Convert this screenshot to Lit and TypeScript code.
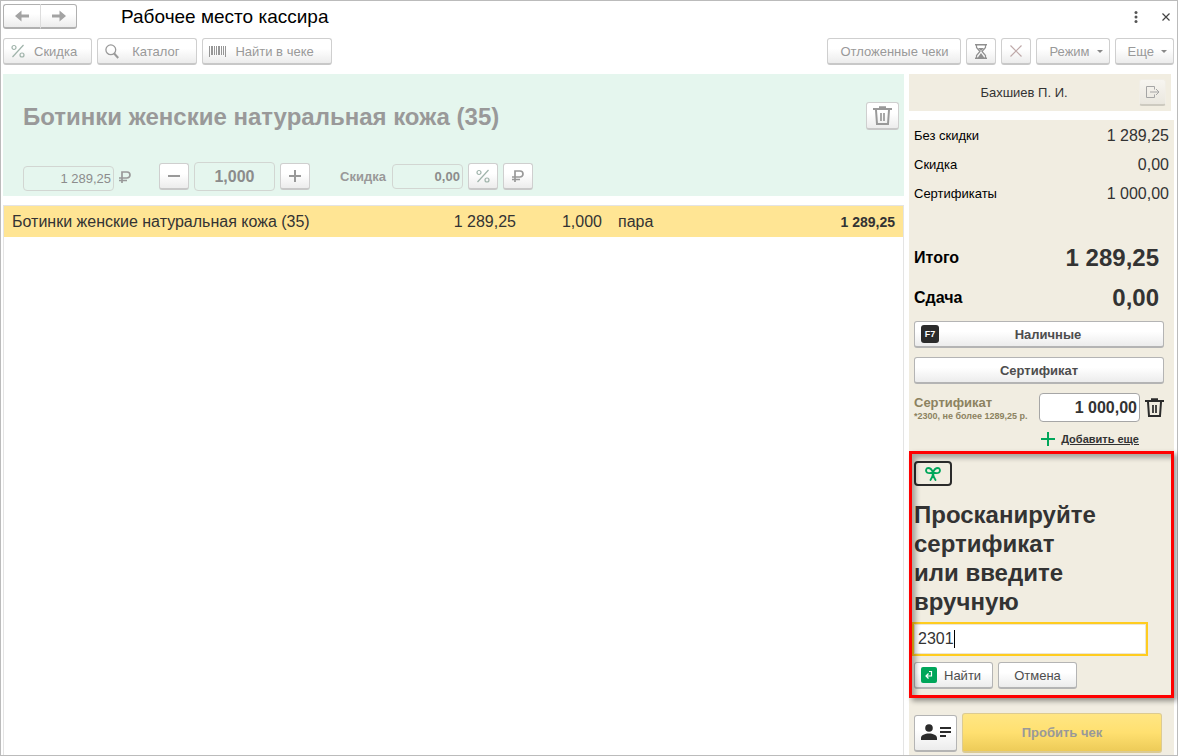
import { LitElement, html, css, svg } from "lit";
import { customElement, property, state } from "lit/decorators.js";

const icons = {
  back: svg`<svg width="16" height="12" viewBox="0 0 16 12"><path d="M1 6 7.500 .5v4H15v3H7.500v4z" fill="#a3a3a3"/></svg>`,
  forward: svg`<svg width="16" height="12" viewBox="0 0 16 12"><path d="M15 6 8.500 .5v4H1v3h7.500v4z" fill="#a3a3a3"/></svg>`,
  percent: svg`<svg width="14" height="14" viewBox="0 0 14 14" fill="none" stroke="#9fb3aa" stroke-width="1.200"><circle cx="3" cy="3.500" r="2"/><circle cx="11" cy="11" r="2"/><path d="M12.500 1 1.500 13"/></svg>`,
  search: svg`<svg width="14" height="15" viewBox="0 0 14 15" fill="none" stroke="#999"><circle cx="5.800" cy="5.800" r="4.900" stroke-width="1.300"/><path d="m9.200 9.500 4 4.500" stroke-width="2"/></svg>`,
  barcode: svg`<svg width="17" height="11" viewBox="0 0 17 11" fill="#969696" shape-rendering="crispEdges"><path d="M0 0h1v11H0zM2 0h2v9H2zM5 0h1v9H5zM7 0h1v9H7zM9 0h2v9H9zM12 0h1v9h-1zM14 0h1v9h-1zM16 0h1v11h-1z"/></svg>`,
  hourglass: svg`<svg width="12" height="15" viewBox="0 0 12 15"><path d="M0 .8h12M0 14.200h12" stroke="#8f8f8f" stroke-width="1.500"/><path d="M1.500 1v2.500L5 7.500 1.500 11.500V14M10.500 1v2.500L7 7.500l3.500 4V14" fill="none" stroke="#8f8f8f" stroke-width="1.200"/><path d="M3 4h6L6 7zM6 9l3.500 5h-7z" fill="#8f8f8f"/></svg>`,
  cross: svg`<svg width="12" height="12" viewBox="0 0 12 12"><path d="m.5.5 11 11M11.500.5l-11 11" stroke="#bfa9a9" stroke-width="1.200"/></svg>`,
  caret: svg`<svg width="6" height="3" viewBox="0 0 6 3"><path d="M0 0h6L3 3z" fill="#888"/></svg>`,
  dots: svg`<svg width="4" height="12" viewBox="0 0 4 12" fill="#555"><circle cx="2" cy="1.600" r="1.500"/><circle cx="2" cy="6" r="1.500"/><circle cx="2" cy="10.400" r="1.500"/></svg>`,
  close: svg`<svg width="8" height="8" viewBox="0 0 8 8"><path d="m.5.5 7 7M7.500.5l-7 7" stroke="#444" stroke-width="1.200"/></svg>`,
  trash: svg`<svg width="19" height="20" viewBox="0 0 19 20" fill="none" stroke="currentColor"><path d="M0 3h19" stroke-width="2"/><path d="M6 1.500h7" stroke-width="2.500"/><path d="m3 4 1 14h11l1-14" stroke-width="2"/><path d="M8 7v8M11 7v8" stroke-width="1.700"/></svg>`,
  minus: svg`<svg width="12" height="12" viewBox="0 0 12 12"><path d="M0 6h12" stroke="#999" stroke-width="2"/></svg>`,
  plus: svg`<svg width="12" height="12" viewBox="0 0 12 12"><path d="M0 6h12M6 0v12" stroke="#999" stroke-width="2"/></svg>`,
  add: svg`<svg width="14" height="14" viewBox="0 0 14 14"><path d="M0 7h14M7 0v14" stroke="#00a65a" stroke-width="2"/></svg>`,
  ruble: svg`<svg width="12" height="12" viewBox="0 0 12 12" fill="none" stroke="#999" stroke-width="1.700"><path d="M3 12V1h5a2.900 2.900 0 0 1 0 6H0M0 9.500h8"/></svg>`,
  exit: svg`<svg width="14" height="12" viewBox="0 0 14 12" fill="none" stroke="#a5a5a5"><path d="M8.500 3.500V.5h-8v11h8v-3M4 6h9M10 3l3 3-3 3"/></svg>`,
  bow: svg`<svg width="16" height="14" viewBox="0 0 16 14" fill="none" stroke="#00a65a" stroke-width="1.900" stroke-linecap="round"><path d="M8 5.500C7 2.500 5 1 3 1 .8 1 .5 4.500 2 5.500s4.500.5 6 0Zm0 0C9 2.500 11 1 13 1c2.200 0 2.500 3.500 1 4.500s-4.500.5-6 0ZM8 6c0 3-1 5-2.500 7M8 6c0 3 1 5 2.500 7"/></svg>`,
  enter: svg`<svg width="16" height="16" viewBox="0 0 16 16"><rect width="16" height="16" rx="2" fill="#00a65a"/><path d="M8 4.500h2.500V9H5M7.500 6.500 5 9l2.500 2.500" fill="none" stroke="#fff" stroke-width="1.200"/></svg>`,
  customer: svg`<svg width="30" height="17" viewBox="0 0 30 17" fill="#2b2b2b"><circle cx="8" cy="4" r="3.800"/><path d="M0 16v-2c0-3 4-4.500 8-4.500s8 1.500 8 4.500v2zM19 3h11v2H19zM19 7h11v2H19zM19 11h6v2h-6z"/></svg>`,
};

interface ReceiptLine {
  name: string;
  price: string;
  quantity: string;
  unit: string;
  sum: string;
}

const base = css`
  * {
    box-sizing: border-box;
  }
  svg {
    display: block;
    flex: none;
  }
  button,
  input {
    font-family: inherit;
    margin: 0;
  }
  .btn {
    display: inline-flex;
    align-items: center;
    justify-content: center;
    flex: none;
    height: 27px;
    padding: 0;
    border: 1px solid #cfcfcf;
    border-bottom: 2px solid #c8c8c8;
    border-radius: 3px;
    background: linear-gradient(#fff 40%, #ececec);
    color: #999;
    font-size: 13px;
    white-space: nowrap;
  }
  .square {
    width: 30px;
  }
`;

@customElement("cashier-toolbar")
export class CashierToolbar extends LitElement {
  static styles = [
    base,
    css`
      :host {
        display: block;
      }
      .title-bar {
        display: flex;
        align-items: center;
        height: 31px;
        padding: 0 1px 0 2px;
      }
      .nav {
        display: flex;
        margin-right: 44px;
      }
      .nav .btn {
        width: 37px;
        height: 25px;
        border-color: #b0b0b0;
      }
      .nav .btn:first-child {
        border-radius: 3px 0 0 3px;
        width: 38px;
        border-right-color: #ddd;
      }
      .nav .btn:last-child {
        border-radius: 0 3px 3px 0;
        border-left: 0;
        width: 36px;
      }
      h1 {
        margin: 0;
        font-size: 19px;
        font-weight: 400;
        color: #000;
      }
      .plain {
        display: flex;
        justify-content: center;
        width: 20px;
        padding: 0;
        border: 0;
        background: none;
      }
      .window-tools {
        display: flex;
        align-items: center;
        gap: 10px;
        margin-left: auto;
      }
      .tools {
        display: flex;
        gap: 5px;
        padding: 6px 3px 9px 2px;
      }
      .tools .btn.text {
        padding: 0 14px 0 7px;
        gap: 9px;
      }
      .tools .btn.search {
        padding: 0 17px 0 7px;
        gap: 13px;
      }
      .tools .btn.find {
        padding: 0 17px 0 6px;
        gap: 9px;
      }
      .tools .btn.label {
        padding: 0 12px;
      }
      .tools .btn.menu {
        padding: 0 6px 0 12px;
        gap: 7px;
      }
      .spacer {
        flex: 1;
      }
    `,
  ];

  render() {
    return html`
      <header class="title-bar">
        <nav class="nav">
          <button class="btn" aria-label="Назад">${icons.back}</button>
          <button class="btn" aria-label="Вперед">${icons.forward}</button>
        </nav>
        <h1>Рабочее место кассира</h1>
        <div class="window-tools">
          <button class="plain" aria-label="Меню">${icons.dots}</button>
          <button class="plain" aria-label="Закрыть">${icons.close}</button>
        </div>
      </header>
      <div class="tools">
        <button class="btn text">${icons.percent}Скидка</button>
        <button class="btn search">${icons.search}Каталог</button>
        <button class="btn find">${icons.barcode}Найти в чеке</button>
        <span class="spacer"></span>
        <button class="btn label">Отложенные чеки</button>
        <button class="btn square" aria-label="Отложить">${icons.hourglass}</button>
        <button class="btn square" aria-label="Отменить">${icons.cross}</button>
        <button class="btn menu">Режим ${icons.caret}</button>
        <button class="btn menu">Еще ${icons.caret}</button>
      </div>
    `;
  }
}

@customElement("current-item")
export class CurrentItem extends LitElement {
  static styles = [
    base,
    css`
      :host {
        display: block;
        padding: 28px 5px 5px 20px;
        background: #e5f6ee;
        color: #999;
      }
      .heading {
        display: flex;
        justify-content: space-between;
        align-items: center;
        height: 28px;
      }
      h2 {
        margin: 0;
        font-size: 24px;
        line-height: 30px;
        padding-top: 2px;
      }
      .delete {
        width: 33px;
        height: 28px;
      }
      .controls {
        display: flex;
        align-items: center;
        gap: 5px;
        margin-top: 32px;
      }
      input {
        border: 1px solid #d2d6d2;
        border-radius: 4px;
        background: transparent;
        color: #8c8c8c;
        text-align: right;
        padding: 0 2px;
        height: 25px;
      }
      .price {
        width: 91px;
        font-size: 13px;
        margin-top: 3px;
      }
      .currency {
        margin-right: 23px;
      }
      .quantity {
        width: 81px;
        height: 29px;
        text-align: center;
        font-size: 16px;
        font-weight: 700;
      }
      .discount {
        width: 71px;
        font-size: 13px;
        font-weight: 700;
      }
      label {
        margin-left: 25px;
        margin-right: 1px;
        font-size: 13px;
        font-weight: 700;
      }
    `,
  ];

  @property() name = "";

  render() {
    return html`
      <div class="heading">
        <h2>${this.name}</h2>
        <button class="btn delete" aria-label="Удалить">${icons.trash}</button>
      </div>
      <div class="controls">
        <input class="price" aria-label="Цена" value="1 289,25" readonly />
        <span class="currency">${icons.ruble}</span>
        <button class="btn square" aria-label="Меньше">${icons.minus}</button>
        <input class="quantity" aria-label="Количество" value="1,000" readonly />
        <button class="btn square" aria-label="Больше">${icons.plus}</button>
        <label for="discount">Скидка</label>
        <input id="discount" class="discount" value="0,00" readonly />
        <button class="btn square" aria-label="Скидка в процентах">${icons.percent}</button>
        <button class="btn square" aria-label="Скидка в рублях">${icons.ruble}</button>
      </div>
    `;
  }
}

@customElement("receipt-lines")
export class ReceiptLines extends LitElement {
  static styles = [
    base,
    css`
      :host {
        display: block;
        border: 1px solid #e4e4e4;
        border-bottom: 0;
      }
      table {
        width: 100%;
        table-layout: fixed;
        border-collapse: collapse;
        font-size: 16px;
        color: #333;
      }
      td {
        height: 31px;
        padding: 0 8px;
        white-space: nowrap;
        background: #ffe594;
      }
      .name {
        width: 420px;
      }
      .price {
        width: 100px;
      }
      .quantity {
        width: 86px;
      }
      .num {
        text-align: right;
      }
      .sum {
        font-size: 14px;
        font-weight: 700;
      }
    `,
  ];

  @property({ attribute: false }) lines: ReceiptLine[] = [];

  render() {
    return html`
      <table>
        <tbody>
          ${this.lines.map(
            (line) => html`
              <tr>
                <td class="name">${line.name}</td>
                <td class="price num">${line.price}</td>
                <td class="quantity num">${line.quantity}</td>
                <td>${line.unit}</td>
                <td class="sum num">${line.sum}</td>
              </tr>
            `,
          )}
        </tbody>
      </table>
    `;
  }
}

@customElement("certificate-scan")
export class CertificateScan extends LitElement {
  static styles = [
    base,
    css`
      :host {
        display: block;
        position: relative;
        padding: 10px 28px 9px 5px;
      }
      .frame {
        position: absolute;
        inset: 0;
        border: 3px solid #f00;
        box-shadow:
          3px 3px 5px rgba(0, 0, 0, 0.4),
          inset 4px 4px 5px rgba(0, 0, 0, 0.3);
        pointer-events: none;
      }
      .badge {
        display: flex;
        align-items: center;
        justify-content: center;
        width: 38px;
        height: 25px;
        border: 2px solid #2b2b2b;
        border-radius: 4px;
      }
      .prompt {
        display: block;
        margin: 14px 0 8px;
        font-size: 24px;
        line-height: 29px;
        font-weight: 700;
        color: #333;
      }
      .prompt span {
        display: block;
      }
      .field {
        position: relative;
      }
      input {
        display: block;
        width: 100%;
        height: 30px;
        padding: 0 3px;
        border: 1px solid #ece6d4;
        outline: 2px solid #ffcc1f;
        background: #fff;
        color: #333;
        font-size: 16px;
      }
      .cursor {
        position: absolute;
        left: 40px;
        top: 6px;
        width: 1px;
        height: 18px;
        background: #000;
      }
      .actions {
        display: flex;
        gap: 5px;
        margin-top: 8px;
      }
      .btn {
        width: 79px;
        gap: 7px;
        border-color: #b4b4b4;
        color: #4d4d4d;
      }
      .find {
        justify-content: flex-start;
        padding: 0 6px;
      }
    `,
  ];

  @state() private code = "2301";

  private onInput(event: Event) {
    this.code = (event.target as HTMLInputElement).value;
  }

  render() {
    return html`
      <div class="badge">${icons.bow}</div>
      <label class="prompt" for="code">
        <span>Просканируйте</span>
        <span>сертификат</span>
        <span>или введите</span>
        <span>вручную</span>
      </label>
      <div class="field">
        <input id="code" .value=${this.code} @input=${this.onInput} />
        <span class="cursor"></span>
      </div>
      <div class="actions">
        <button class="btn find">${icons.enter}Найти</button>
        <button class="btn">Отмена</button>
      </div>
      <div class="frame"></div>
    `;
  }
}

@customElement("payment-panel")
export class PaymentPanel extends LitElement {
  static styles = [
    base,
    css`
      :host {
        display: flex;
        flex-direction: column;
        gap: 9px;
        color: #333;
      }
      .user {
        display: flex;
        align-items: center;
        height: 37px;
        margin-right: 3px;
        padding-right: 5px;
        background: #f1ede1;
        font-size: 13px;
      }
      .user-name {
        flex: 1;
        text-align: center;
      }
      .exit {
        width: 27px;
        border-color: #f1eee6;
        border-bottom-color: #cdcac0;
        background: linear-gradient(#f7f5f0, #eae7df);
      }
      .panel {
        flex: 1;
        padding-top: 1px;
        background: #f1ede1;
      }
      dl {
        margin: 0;
      }
      .row,
      .total {
        display: flex;
        align-items: center;
        justify-content: space-between;
      }
      .row {
        height: 29px;
        padding: 0 5px;
      }
      .total {
        height: 40px;
        padding: 0 15px 0 5px;
        font-weight: 700;
      }
      .totals {
        margin: 30px 0 3px;
      }
      dt {
        color: #000;
        font-size: 13px;
      }
      dd {
        margin: 0;
        font-size: 16px;
      }
      .total dt {
        font-size: 16px;
      }
      .total dd {
        font-size: 24px;
      }
      .methods {
        display: flex;
        flex-direction: column;
        gap: 9px;
        padding: 0 10px 0 5px;
      }
      .method {
        border-color: #b4b4b4;
        color: #4d4d4d;
        font-weight: 700;
        padding: 0 6px;
      }
      .method span {
        flex: 1;
      }
      kbd {
        display: flex;
        align-items: center;
        justify-content: center;
        width: 18px;
        height: 18px;
        border-radius: 3px;
        background: #2b2b2b;
        color: #fff;
        font: 700 9px "Liberation Sans", Arial, sans-serif;
      }
      .certificate {
        display: flex;
        align-items: center;
        gap: 5px;
        height: 29px;
        color: #8c8260;
      }
      .certificate label {
        flex: 1;
        font-size: 13px;
        line-height: 16px;
        font-weight: 700;
        white-space: nowrap;
      }
      .certificate small {
        display: block;
        font-size: 9px;
        line-height: 10px;
      }
      .certificate input {
        width: 101px;
        height: 29px;
        padding: 0 2px;
        border: 1px solid #a6a6a6;
        border-radius: 4px;
        background: #fff;
        color: #333;
        font-size: 16px;
        font-weight: 700;
        text-align: right;
      }
      .remove {
        padding: 0;
        border: 0;
        background: none;
        color: #2b2b2b;
      }
      .add {
        display: flex;
        align-items: center;
        gap: 6px;
        height: 16px;
        margin-right: 25px;
        align-self: flex-end;
        color: #333;
        font-size: 11px;
        font-weight: 700;
        text-decoration: none;
      }
      .add span {
        text-decoration: underline;
      }
      certificate-scan {
        margin-top: 4px;
      }
      .footer {
        display: flex;
        align-items: center;
        gap: 5px;
        padding: 15px 12px 1px 5px;
      }
      .customer {
        width: 43px;
        height: 37px;
        border-color: #b4b4b4;
      }
      .submit {
        flex: 1;
        height: 40px;
        border-color: #dccb92;
        background: linear-gradient(#ffe684, #ffe070 50%, #edcb58);
        font-weight: 700;
      }
    `,
  ];

  render() {
    return html`
      <div class="user">
        <span class="user-name">Бахшиев П. И.</span>
        <button class="btn exit" aria-label="Выйти">${icons.exit}</button>
      </div>
      <div class="panel">
        <dl>
          <div class="row"><dt>Без скидки</dt><dd>1 289,25</dd></div>
          <div class="row"><dt>Скидка</dt><dd>0,00</dd></div>
          <div class="row"><dt>Сертификаты</dt><dd>1 000,00</dd></div>
        </dl>
        <dl class="totals">
          <div class="total"><dt>Итого</dt><dd>1 289,25</dd></div>
          <div class="total"><dt>Сдача</dt><dd>0,00</dd></div>
        </dl>
        <div class="methods">
          <button class="btn method"><kbd>F7</kbd><span>Наличные</span></button>
          <button class="btn method"><span>Сертификат</span></button>
          <div class="certificate">
            <label for="amount">Сертификат<small>*2300, не более 1289,25 р.</small></label>
            <input id="amount" value="1 000,00" />
            <button class="remove" aria-label="Удалить сертификат">${icons.trash}</button>
          </div>
          <a class="add" href="#">${icons.add}<span>Добавить еще</span></a>
        </div>
        <certificate-scan></certificate-scan>
        <div class="footer">
          <button class="btn customer" aria-label="Покупатель">${icons.customer}</button>
          <button class="btn submit">Пробить чек</button>
        </div>
      </div>
    `;
  }
}

@customElement("app-root")
export class AppRoot extends LitElement {
  static styles = [
    base,
    css`
      :host {
        display: flex;
        flex-direction: column;
        box-sizing: border-box;
        min-height: 100vh;
        border: 1px solid #bbb;
        background: #fff;
        font-family: "Liberation Sans", Arial, sans-serif;
      }
      main {
        flex: 1;
        display: grid;
        grid-template-columns: minmax(0, 1fr) 265px;
        gap: 5px;
        padding: 0 3px 0 2px;
      }
      .receipt {
        display: flex;
        flex-direction: column;
        gap: 9px;
      }
      receipt-lines {
        flex: 1;
      }
    `,
  ];

  @state() private lines: ReceiptLine[] = [
    {
      name: "Ботинки женские натуральная кожа (35)",
      price: "1 289,25",
      quantity: "1,000",
      unit: "пара",
      sum: "1 289,25",
    },
  ];

  render() {
    return html`
      <cashier-toolbar></cashier-toolbar>
      <main>
        <section class="receipt">
          <current-item .name=${this.lines[0].name}></current-item>
          <receipt-lines .lines=${this.lines}></receipt-lines>
        </section>
        <payment-panel></payment-panel>
      </main>
    `;
  }
}
